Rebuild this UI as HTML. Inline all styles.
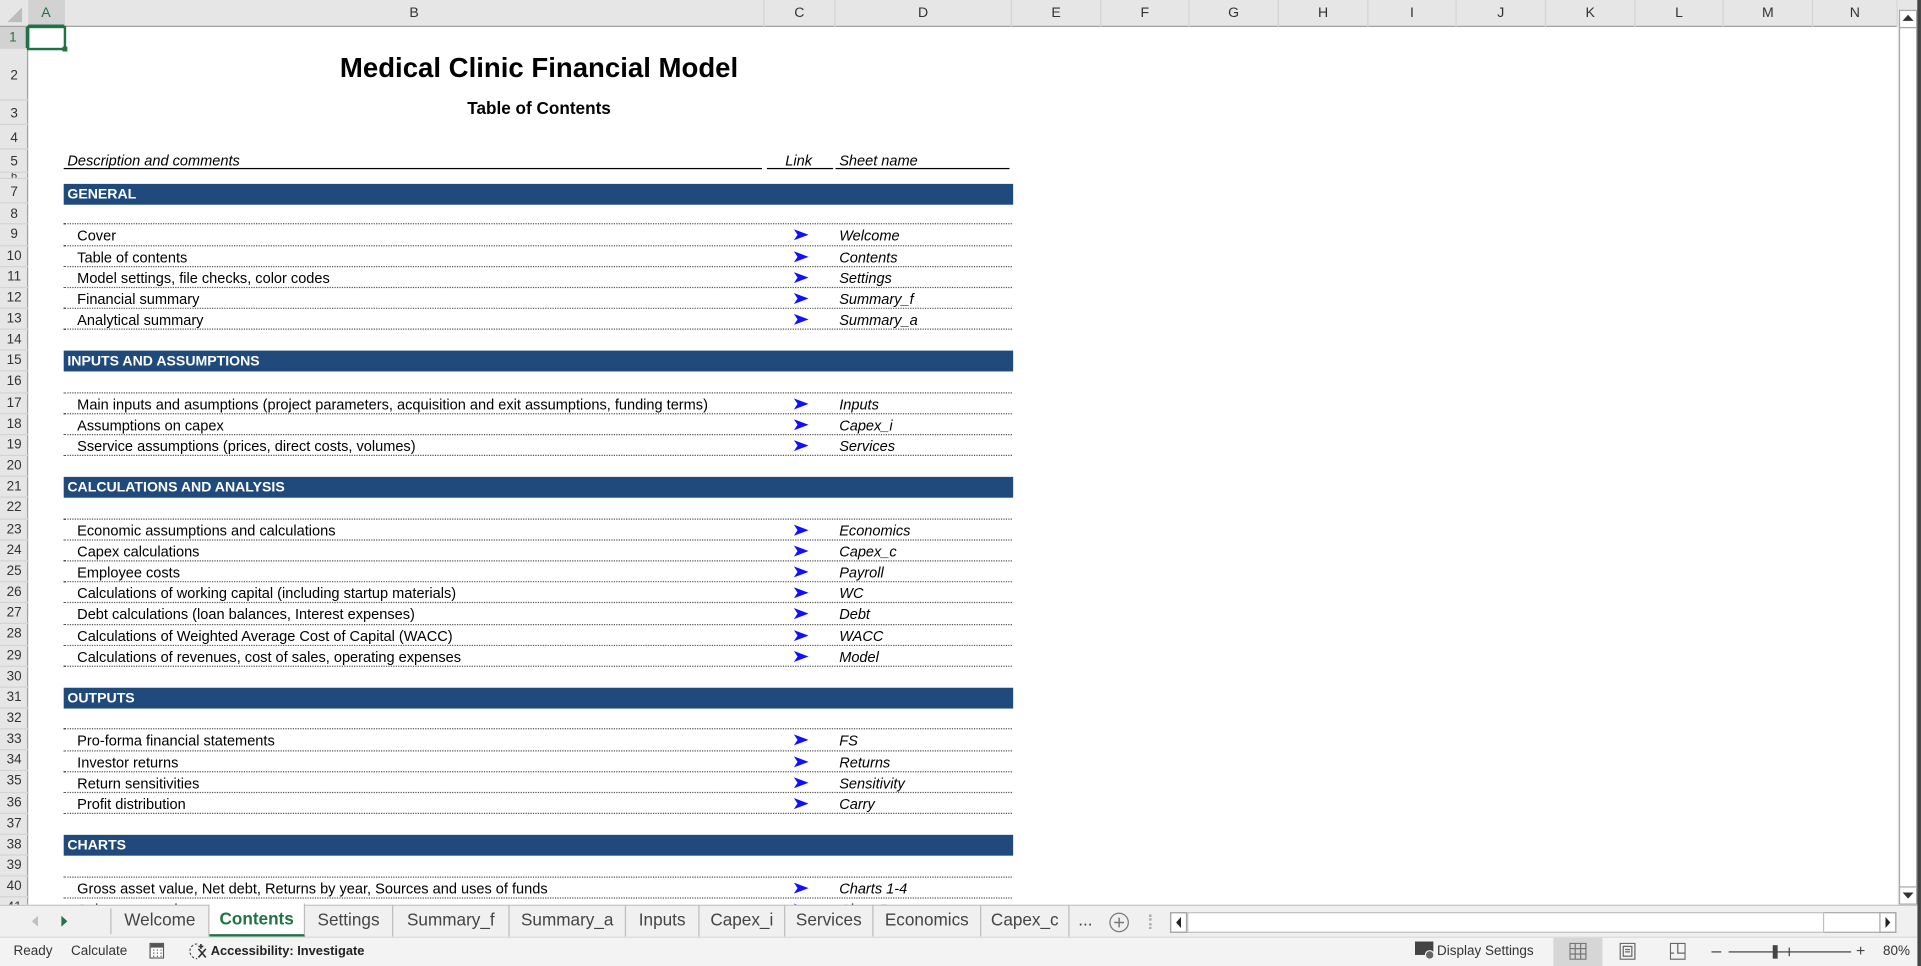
<!DOCTYPE html>
<html><head><meta charset="utf-8"><style>
*{margin:0;padding:0;box-sizing:border-box}
html,body{width:1921px;height:966px;overflow:hidden;background:#fff}
#w{position:absolute;left:0;top:0;width:1568px;height:788px;transform:scale(1.2251,1.2259);transform-origin:0 0;font-family:"Liberation Sans",sans-serif;font-size:11px;color:#000;overflow:hidden}
.a{position:absolute}
.ch{position:absolute;top:0;height:22px;line-height:22px;text-align:center;color:#333;font-size:11.5px;border-right:1px solid #d4d4d4}
.rh{position:absolute;left:0;width:23px;text-align:center;color:#333;font-size:11px;border-bottom:1px solid #d4d4d4}
.r{position:absolute;left:52px;width:774px;height:17.17px;line-height:19px;font-size:11.9px}
.d{border-bottom:1px dotted #555}
.t{position:absolute;left:11px;white-space:nowrap}
.s{position:absolute;left:633px;font-style:italic;white-space:nowrap}
.ar{position:absolute;left:596px;top:4px;width:12px;height:9px}
.h{position:absolute;left:52px;width:775px;height:17px;line-height:18px;background:#204a7b;color:#fff;font-weight:bold;padding-left:3px;font-size:11.5px}
.tab{position:absolute;top:738px;height:26px;line-height:24px;text-align:center;font-size:14px;color:#444;border-right:1px solid #bcbcbc}
</style></head><body><div id="w">
<div class="a" style="left:0;top:0;width:1549px;height:22px;background:#e6e6e6;border-bottom:1px solid #a0a0a0"></div>
<svg class="a" style="left:5px;top:5px" width="14" height="14"><polygon points="13,1 13,13 1,13" fill="#bdbdbd"/></svg>
<div class="ch" style="left:23px;width:30px;background:#d2d2d2;color:#217346;border-bottom:2px solid #217346">A</div>
<div class="ch" style="left:53px;width:571px">B</div>
<div class="ch" style="left:624px;width:58px">C</div>
<div class="ch" style="left:682px;width:144px">D</div>
<div class="ch" style="left:826px;width:73px">E</div>
<div class="ch" style="left:899px;width:72px">F</div>
<div class="ch" style="left:971px;width:73px">G</div>
<div class="ch" style="left:1044px;width:73px">H</div>
<div class="ch" style="left:1117px;width:72px">I</div>
<div class="ch" style="left:1189px;width:73px">J</div>
<div class="ch" style="left:1262px;width:73px">K</div>
<div class="ch" style="left:1335px;width:72px">L</div>
<div class="ch" style="left:1407px;width:73px">M</div>
<div class="ch" style="left:1480px;width:69px">N</div>
<div class="a" style="left:0;top:22px;width:23px;height:716px;background:#e6e6e6;border-right:1px solid #a0a0a0"></div>
<div class="rh" style="top:22px;height:18px;line-height:18px;background:#d2d2d2;color:#217346;border-right:2px solid #217346">1</div>
<div class="rh" style="top:40px;height:42px;line-height:44px">2</div>
<div class="rh" style="top:82px;height:20px;line-height:22px">3</div>
<div class="rh" style="top:102px;height:20px;line-height:22px">4</div>
<div class="rh" style="top:122px;height:19px;line-height:20px">5</div>
<div class="rh" style="top:141px;height:5px;line-height:5px;overflow:hidden;font-size:9px">6</div>
<div class="rh" style="top:146px;height:20px;line-height:22px">7</div>
<div class="rh" style="top:166px;height:17.4px;line-height:18px">8</div>
<div class="a" style="left:0;top:183.4px">
<div class="rh" style="position:relative;height:17.17px;line-height:17px">9</div><div class="rh" style="position:relative;height:17.17px;line-height:17px">10</div><div class="rh" style="position:relative;height:17.17px;line-height:17px">11</div><div class="rh" style="position:relative;height:17.17px;line-height:17px">12</div><div class="rh" style="position:relative;height:17.17px;line-height:17px">13</div><div class="rh" style="position:relative;height:17.17px;line-height:17px">14</div><div class="rh" style="position:relative;height:17.17px;line-height:17px">15</div><div class="rh" style="position:relative;height:17.17px;line-height:17px">16</div><div class="rh" style="position:relative;height:17.17px;line-height:17px">17</div><div class="rh" style="position:relative;height:17.17px;line-height:17px">18</div><div class="rh" style="position:relative;height:17.17px;line-height:17px">19</div><div class="rh" style="position:relative;height:17.17px;line-height:17px">20</div><div class="rh" style="position:relative;height:17.17px;line-height:17px">21</div><div class="rh" style="position:relative;height:17.17px;line-height:17px">22</div><div class="rh" style="position:relative;height:17.17px;line-height:17px">23</div><div class="rh" style="position:relative;height:17.17px;line-height:17px">24</div><div class="rh" style="position:relative;height:17.17px;line-height:17px">25</div><div class="rh" style="position:relative;height:17.17px;line-height:17px">26</div><div class="rh" style="position:relative;height:17.17px;line-height:17px">27</div><div class="rh" style="position:relative;height:17.17px;line-height:17px">28</div><div class="rh" style="position:relative;height:17.17px;line-height:17px">29</div><div class="rh" style="position:relative;height:17.17px;line-height:17px">30</div><div class="rh" style="position:relative;height:17.17px;line-height:17px">31</div><div class="rh" style="position:relative;height:17.17px;line-height:17px">32</div><div class="rh" style="position:relative;height:17.17px;line-height:17px">33</div><div class="rh" style="position:relative;height:17.17px;line-height:17px">34</div><div class="rh" style="position:relative;height:17.17px;line-height:17px">35</div><div class="rh" style="position:relative;height:17.17px;line-height:17px">36</div><div class="rh" style="position:relative;height:17.17px;line-height:17px">37</div><div class="rh" style="position:relative;height:17.17px;line-height:17px">38</div><div class="rh" style="position:relative;height:17.17px;line-height:17px">39</div><div class="rh" style="position:relative;height:17.17px;line-height:17px">40</div><div class="rh" style="position:relative;height:17.17px;line-height:17px">41</div>
</div>
<div class="a" style="left:22px;top:21px;width:32px;height:20px;border:2px solid #217346"></div>
<div class="a" style="left:51px;top:38px;width:4px;height:4px;background:#217346"></div>
<div class="a" style="left:53px;top:43px;width:774px;text-align:center;font-weight:bold;font-size:22.5px">Medical Clinic Financial Model</div>
<div class="a" style="left:53px;top:80px;width:774px;text-align:center;font-weight:bold;font-size:14px">Table of Contents</div>
<div class="a" style="left:55px;top:124px;font-style:italic;font-size:11.9px">Description and comments</div>
<div class="a" style="left:52px;top:137px;width:570px;border-top:1px solid #000"></div>
<div class="a" style="left:641px;top:124px;font-style:italic;font-size:11.9px">Link</div>
<div class="a" style="left:626px;top:137px;width:54px;border-top:1px solid #000"></div>
<div class="a" style="left:685px;top:124px;font-style:italic;font-size:11.9px">Sheet name</div>
<div class="a" style="left:682px;top:137px;width:142px;border-top:1px solid #000"></div>
<svg width="0" height="0" style="position:absolute"><defs><polygon id="p" points="0,0 12,4.5 0,9 3,4.5" fill="#1010ff"/></defs></svg>
<div class="h" style="top:149.5px">GENERAL</div>
<div class="r d" style="top:166px;height:17.4px"></div>
<div class="r d" style="top:183.4px"><span class="t">Cover</span><svg class="ar"><use href="#p"/></svg><span class="s">Welcome</span></div>
<div class="r d" style="top:200.6px"><span class="t">Table of contents</span><svg class="ar"><use href="#p"/></svg><span class="s">Contents</span></div>
<div class="r d" style="top:217.7px"><span class="t">Model settings, file checks, color codes</span><svg class="ar"><use href="#p"/></svg><span class="s">Settings</span></div>
<div class="r d" style="top:234.9px"><span class="t">Financial summary</span><svg class="ar"><use href="#p"/></svg><span class="s">Summary_f</span></div>
<div class="r d" style="top:252.1px"><span class="t">Analytical summary</span><svg class="ar"><use href="#p"/></svg><span class="s">Summary_a</span></div>
<div class="h" style="top:286.4px">INPUTS AND ASSUMPTIONS</div>
<div class="r d" style="top:303.6px"></div>
<div class="r d" style="top:320.8px"><span class="t">Main inputs and asumptions (project parameters, acquisition and exit assumptions, funding terms)</span><svg class="ar"><use href="#p"/></svg><span class="s">Inputs</span></div>
<div class="r d" style="top:337.9px"><span class="t">Assumptions on capex</span><svg class="ar"><use href="#p"/></svg><span class="s">Capex_i</span></div>
<div class="r d" style="top:355.1px"><span class="t">Sservice assumptions (prices, direct costs, volumes)</span><svg class="ar"><use href="#p"/></svg><span class="s">Services</span></div>
<div class="h" style="top:389.4px">CALCULATIONS AND ANALYSIS</div>
<div class="r d" style="top:406.6px"></div>
<div class="r d" style="top:423.8px"><span class="t">Economic assumptions and calculations</span><svg class="ar"><use href="#p"/></svg><span class="s">Economics</span></div>
<div class="r d" style="top:441px"><span class="t">Capex calculations</span><svg class="ar"><use href="#p"/></svg><span class="s">Capex_c</span></div>
<div class="r d" style="top:458.1px"><span class="t">Employee costs</span><svg class="ar"><use href="#p"/></svg><span class="s">Payroll</span></div>
<div class="r d" style="top:475.3px"><span class="t">Calculations of working capital (including startup materials)</span><svg class="ar"><use href="#p"/></svg><span class="s">WC</span></div>
<div class="r d" style="top:492.4px"><span class="t">Debt calculations (loan balances, Interest expenses)</span><svg class="ar"><use href="#p"/></svg><span class="s">Debt</span></div>
<div class="r d" style="top:509.6px"><span class="t">Calculations of Weighted Average Cost of Capital (WACC)</span><svg class="ar"><use href="#p"/></svg><span class="s">WACC</span></div>
<div class="r d" style="top:526.8px"><span class="t">Calculations of revenues, cost of sales, operating expenses</span><svg class="ar"><use href="#p"/></svg><span class="s">Model</span></div>
<div class="h" style="top:561.1px">OUTPUTS</div>
<div class="r d" style="top:578.3px"></div>
<div class="r d" style="top:595.4px"><span class="t">Pro-forma financial statements</span><svg class="ar"><use href="#p"/></svg><span class="s">FS</span></div>
<div class="r d" style="top:612.6px"><span class="t">Investor returns</span><svg class="ar"><use href="#p"/></svg><span class="s">Returns</span></div>
<div class="r d" style="top:629.8px"><span class="t">Return sensitivities</span><svg class="ar"><use href="#p"/></svg><span class="s">Sensitivity</span></div>
<div class="r d" style="top:647px"><span class="t">Profit distribution</span><svg class="ar"><use href="#p"/></svg><span class="s">Carry</span></div>
<div class="h" style="top:681.3px">CHARTS</div>
<div class="r d" style="top:698.5px"></div>
<div class="r d" style="top:715.6px"><span class="t">Gross asset value, Net debt, Returns by year, Sources and uses of funds</span><svg class="ar"><use href="#p"/></svg><span class="s">Charts 1-4</span></div>
<div class="r" style="top:732.8px"><span class="t">Sales revenue by model</span><svg class="ar"><use href="#p"/></svg><span class="s">Chart 5</span></div>
<div class="a" style="left:1549px;top:0;width:19px;height:738px;background:#e6e6e6"></div>
<div class="a" style="left:1550px;top:22px;width:15px;height:716px;background:#fff;border:1px solid #a8a8a8"></div>
<div class="a" style="left:1550px;top:8px;width:15px;height:15px;border:1px solid #a8a8a8;background:#fff"></div>
<svg class="a" style="left:1553px;top:12px" width="9" height="6"><polygon points="0,5 4.5,0 9,5" fill="#333"/></svg>
<div class="a" style="left:1550px;top:723px;width:15px;height:15px;border:1px solid #a8a8a8;background:#fff"></div>
<svg class="a" style="left:1553px;top:728px" width="9" height="6"><polygon points="0,0 4.5,5 9,0" fill="#333"/></svg>
<div class="a" style="left:1565px;top:0;width:3px;height:788px;background:#444"></div>
<div class="a" style="left:0;top:738px;width:1565px;height:26px;background:#f0f0f0;border-top:1px solid #c6c6c6"></div>
<svg class="a" style="left:26px;top:747px" width="6" height="9"><polygon points="5,0 0,4.5 5,9" fill="#c0c0c0"/></svg>
<svg class="a" style="left:50px;top:747px" width="6" height="9"><polygon points="0,0 5,4.5 0,9" fill="#217346"/></svg>
<div class="a" style="left:90px;top:741px;height:21px;border-left:1px solid #bcbcbc"></div>
<div class="tab" style="left:91px;width:80px">Welcome</div>
<div class="tab" style="left:171px;width:78px;background:#fff;color:#217346;font-weight:bold;border-bottom:2px solid #217346;top:737px;height:27px">Contents</div>
<div class="tab" style="left:249px;width:72px">Settings</div>
<div class="tab" style="left:321px;width:95px">Summary_f</div>
<div class="tab" style="left:416px;width:95px">Summary_a</div>
<div class="tab" style="left:511px;width:60px">Inputs</div>
<div class="tab" style="left:571px;width:70px">Capex_i</div>
<div class="tab" style="left:641px;width:72px">Services</div>
<div class="tab" style="left:713px;width:88px">Economics</div>
<div class="tab" style="left:801px;width:72px">Capex_c</div>
<div class="tab" style="left:873px;width:26px;border:none">...</div>
<svg class="a" style="left:905px;top:744px" width="17" height="17"><circle cx="8.5" cy="8.5" r="7.5" fill="none" stroke="#777"/><path d="M8.5 4.5v8M4.5 8.5h8" stroke="#777" stroke-width="1.2"/></svg>
<div class="a" style="left:938px;top:746px;width:2px;height:12px;border-left:2px dotted #aaa"></div>
<div class="a" style="left:955px;top:744px;width:593px;height:17px;background:#fff;border:1px solid #a8a8a8"></div>
<div class="a" style="left:955px;top:744px;width:14px;height:17px;border:1px solid #a8a8a8"></div>
<svg class="a" style="left:960px;top:748px" width="5" height="9"><polygon points="4,0 0,4.5 4,9" fill="#222"/></svg>
<div class="a" style="left:969px;top:744px;width:520px;height:17px;border:1px solid #c0c0c0;background:#fff"></div>
<div class="a" style="left:1534px;top:744px;width:14px;height:17px;border:1px solid #a8a8a8"></div>
<svg class="a" style="left:1539px;top:748px" width="5" height="9"><polygon points="0,0 4,4.5 0,9" fill="#222"/></svg>
<div class="a" style="left:0;top:764px;width:1565px;height:24px;background:#f3f3f3;border-top:1px solid #dadada"></div>
<div class="a" style="left:11px;top:770px;font-size:11px;color:#333">Ready</div>
<div class="a" style="left:58px;top:770px;font-size:11px;color:#333">Calculate</div>
<svg class="a" style="left:122px;top:769px" width="12" height="13"><rect x="0.5" y="0.5" width="11" height="12" fill="#fff" stroke="#555"/><rect x="1" y="1" width="10" height="3" fill="#555"/><path d="M3 6h1M6 6h1M9 6h1M3 8.5h1M6 8.5h1M9 8.5h1M3 11h1M6 11h1M9 11h1" stroke="#555"/></svg>
<svg class="a" style="left:154px;top:769px" width="16" height="14"><path d="M7 1a6 6 0 1 0 0 12" fill="none" stroke="#555" stroke-dasharray="2 1.5"/><path d="M8 5l6 7M14 5l-6 7M10 1v4M8 3h4" stroke="#333" stroke-width="1.3"/></svg>
<div class="a" style="left:172px;top:770px;font-size:10.5px;font-weight:bold;color:#222">Accessibility: Investigate</div>
<svg class="a" style="left:1155px;top:768px" width="17" height="15"><rect x="0" y="0" width="15" height="11" fill="#444"/><circle cx="12" cy="11" r="3.5" fill="#666" stroke="#f3f3f3"/></svg>
<div class="a" style="left:1173px;top:770px;font-size:11px;color:#333">Display Settings</div>
<div class="a" style="left:1268px;top:765px;width:40px;height:23px;background:#d6d6d6"></div>
<svg class="a" style="left:1281px;top:769px" width="14" height="14"><path d="M0.5 0.5h13v13h-13zM0.5 4.8h13M0.5 9.2h13M4.8 0.5v13M9.2 0.5v13" fill="none" stroke="#777"/></svg>
<svg class="a" style="left:1322px;top:769px" width="13" height="14"><rect x="0.5" y="0.5" width="12" height="13" fill="none" stroke="#666"/><rect x="3" y="3" width="7" height="8" fill="none" stroke="#666"/><path d="M4.5 5.5h4M4.5 7.5h4" stroke="#666"/></svg>
<svg class="a" style="left:1363px;top:769px" width="13" height="14"><path d="M0.5 0.5h12v13h-12zM6.5 0.5v8h6M0.5 8.5h3" fill="none" stroke="#666"/></svg>
<div class="a" style="left:1397px;top:776px;width:8px;border-top:1px solid #444"></div>
<div class="a" style="left:1411px;top:776px;width:100px;border-top:1px solid #444"></div>
<div class="a" style="left:1447px;top:771px;width:4px;height:11px;background:#444"></div>
<div class="a" style="left:1460px;top:773px;height:7px;border-left:1px solid #444"></div>
<div class="a" style="left:1515px;top:768px;font-size:13px;color:#444">+</div>
<div class="a" style="left:1537px;top:770px;font-size:11px;color:#333">80%</div>
</div></body></html>
